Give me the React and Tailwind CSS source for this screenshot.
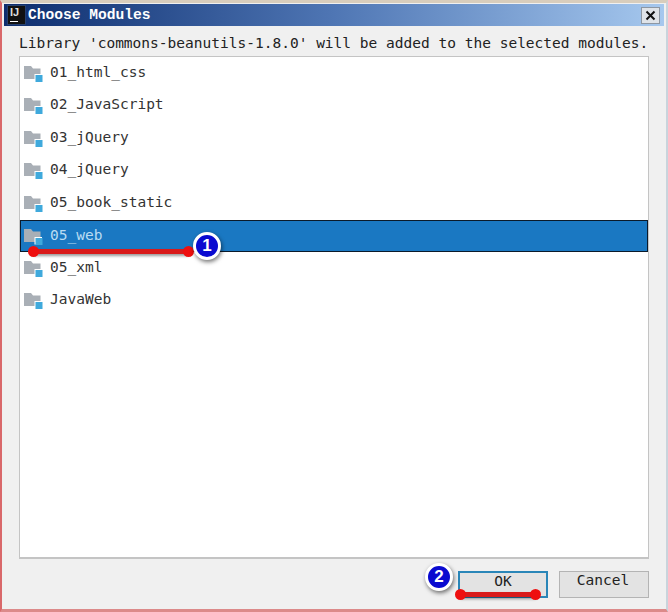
const MODULES = ["01_html_css", "02_JavaScript", "03_jQuery", "04_jQuery", "05_book_static", "05_web", "05_xml", "JavaWeb"];

const MONO = "font-['DejaVu_Sans_Mono',monospace]";

// grey folder with the small blue module square
const ModuleIcon = () => (
  <svg width="20" height="20" viewBox="0 0 20 20" className="shrink-0">
    <path d="M1 3h7l2 2.500h7.500V16H1z" fill="#a9afb6" />
    <rect x="11.500" y="11" width="7.500" height="7.500" fill="#fff" />
    <rect x="12.500" y="12" width="7" height="7" fill="#3fa9dc" />
  </svg>
);

const Badge = ({ n, className }) => (
  <div className={`absolute w-[28px] h-[28px] rounded-full bg-[#0a0ad0] border-[3px] border-white shadow-[1px_2px_4px_rgba(0,0,0,0.55)] flex items-center justify-center text-white text-[17px] font-bold font-['Liberation_Sans',sans-serif] ${className}`}>
    {n}
  </div>
);

// red underline marker with a dot on each end
const Marker = ({ className }) => (
  <div className={`absolute h-[5px] bg-[#d91a1a] shadow-[0_2px_3px_rgba(0,0,0,0.4)] ${className}`}>
    <div className="absolute -left-[5px] -top-[3px] w-[11px] h-[11px] rounded-full bg-[#ee0f0f]" />
    <div className="absolute -right-[5px] -top-[3px] w-[11px] h-[11px] rounded-full bg-[#ee0f0f]" />
  </div>
);

export default function App() {
  return (
    <div className={`relative w-[668px] h-[612px] flex flex-col bg-[#f0f0f0] border-l-2 border-l-[#d9686a] border-r-2 border-r-[#c9d4dc] border-t-[3px] border-t-[#d8cdbc] border-b-[3px] border-b-[#dc8a8a] ${MONO}`}>
      {/* Title bar */}
      <div className="h-[22px] mt-[1px] mx-[2px] flex items-center shrink-0 bg-gradient-to-r from-[#0d2d6e] via-[#4f76b4] to-[#a6c8ee]">
        <div className="w-[19px] h-[20px] ml-[3px] bg-[#111] border border-[#26406e] text-[#ddd] text-[11px] leading-[11px] font-bold pl-[2px] pt-[1px] font-['Liberation_Sans',sans-serif]">
          IJ
          <div className="w-[8px] h-[1px] bg-white mt-[3px]" />
        </div>
        <span className="ml-[2px] pt-[2px] text-white font-bold text-[14.6px] font-['Liberation_Mono',monospace]">Choose Modules</span>
        <div className="ml-auto mr-[4px] w-[19px] h-[17px] flex items-center justify-center bg-[#dfe3e8] border border-[#8d97a3]">
          <svg width="11" height="11" viewBox="0 0 11 11">
            <path d="M1.500 1.500l8 8M9.500 1.500l-8 8" stroke="#111" strokeWidth="2" />
          </svg>
        </div>
      </div>

      <div className="flex-1 flex flex-col px-[17px] min-h-0">
        <p className="h-[30px] pt-[5px] shrink-0 flex items-center text-[14.53px] text-[#222] whitespace-nowrap">
          Library 'commons-beanutils-1.8.0' will be added to the selected modules.
        </p>

        {/* Module list */}
        <div className="h-[503px] bg-white border border-[#c4c4c4] border-b-2 shrink-0">
          {MODULES.map((name) => {
            const selected = name === "05_web";
            return (
              <div
                key={name}
                className={`h-[32.500px] flex items-center gap-[7px] pl-[3px] text-[14.53px] ${
                  selected ? "bg-[#1a78c2] text-[#b9dcf2] outline outline-1 -outline-offset-1 outline-[#0b1a2a]" : "text-[#333] pb-[1px]"
                }`}
              >
                <ModuleIcon />
                <span>{name}</span>
              </div>
            );
          })}
        </div>

        {/* Buttons */}
        <div className="flex justify-end gap-[11px] pt-[12px]">
          <button className="w-[90px] h-[27px] bg-[#e3e3e3] border-2 border-[#2a86b8] text-[14.53px] text-[#222] pb-[7px] leading-none">OK</button>
          <button className="w-[90px] h-[27px] bg-[#e3e3e3] border border-[#b4b4b4] text-[14.53px] text-[#222] pb-[8px] pr-[2px] leading-none">Cancel</button>
        </div>
      </div>

      {/* Annotations */}
      <Marker className="left-[31px] top-[246px] w-[156px]" />
      <Badge n="1" className="left-[191px] top-[229px]" />
      <Marker className="left-[458px] top-[589px] w-[76px]" />
      <Badge n="2" className="left-[423px] top-[560px]" />
    </div>
  );
}
